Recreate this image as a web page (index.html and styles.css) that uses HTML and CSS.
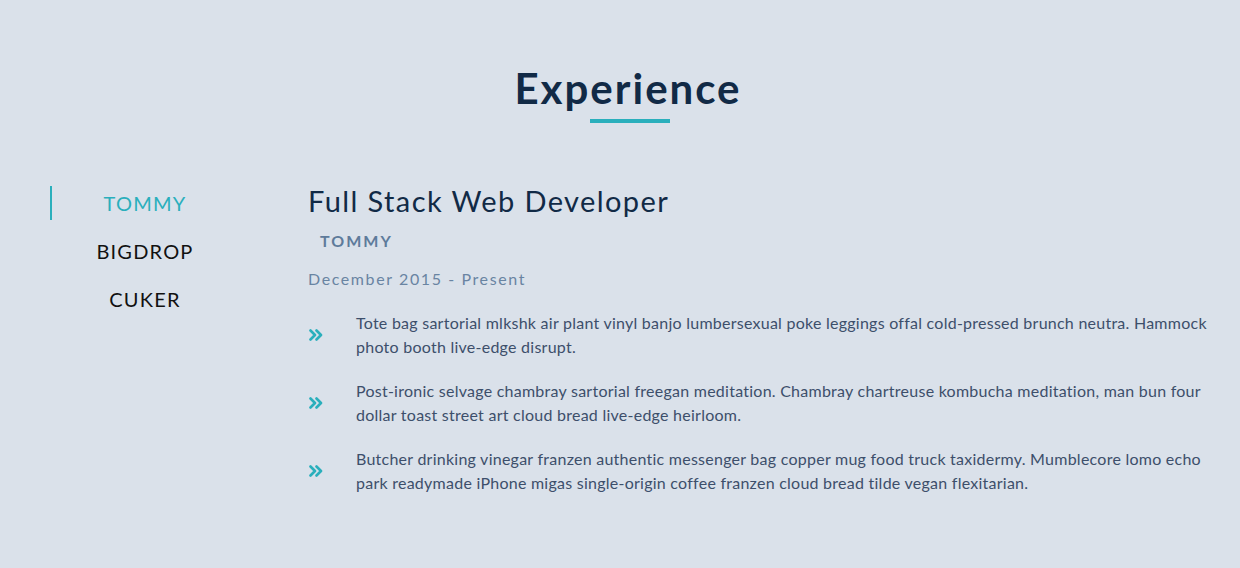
FILE: index.html
```html
<!DOCTYPE html>
<html lang="en">
<head>
<meta charset="utf-8">
<title>Experience</title>
<link rel="stylesheet" href="styles.css">
</head>
<body>
<section class="experience">
  <h2 class="section-title">Experience</h2>
  <div class="title-bar"></div>
  <div class="jobs">
    <ul class="tabs">
      <li class="tab active">TOMMY</li>
      <li class="tab">BIGDROP</li>
      <li class="tab">CUKER</li>
    </ul>
    <div class="job">
      <h3 class="job-title">Full Stack Web Developer</h3>
      <div class="company">TOMMY</div>
      <div class="dates">December 2015 - Present</div>
      <ul class="duties">
        <li class="duty">
          <svg class="chev" viewBox="0 0 14 12" width="14" height="12"><path d="M1.5 1.5 L6 6 L1.5 10.5 M7.5 1.5 L12 6 L7.5 10.5" fill="none" stroke="currentColor" stroke-width="2.6" stroke-linecap="round" stroke-linejoin="round"/></svg>
          <p>Tote bag sartorial mlkshk air plant vinyl banjo lumbersexual poke leggings offal cold-pressed brunch neutra. Hammock photo booth live-edge disrupt.</p>
        </li>
        <li class="duty">
          <svg class="chev" viewBox="0 0 14 12" width="14" height="12"><path d="M1.5 1.5 L6 6 L1.5 10.5 M7.5 1.5 L12 6 L7.5 10.5" fill="none" stroke="currentColor" stroke-width="2.6" stroke-linecap="round" stroke-linejoin="round"/></svg>
          <p>Post-ironic selvage chambray sartorial freegan meditation. Chambray chartreuse kombucha meditation, man bun four dollar toast street art cloud bread live-edge heirloom.</p>
        </li>
        <li class="duty">
          <svg class="chev" viewBox="0 0 14 12" width="14" height="12"><path d="M1.5 1.5 L6 6 L1.5 10.5 M7.5 1.5 L12 6 L7.5 10.5" fill="none" stroke="currentColor" stroke-width="2.6" stroke-linecap="round" stroke-linejoin="round"/></svg>
          <p>Butcher drinking vinegar franzen authentic messenger bag copper mug food truck taxidermy. Mumblecore lomo echo park readymade iPhone migas single-origin coffee franzen cloud bread tilde vegan flexitarian.</p>
        </li>
      </ul>
    </div>
  </div>
</section>
</body>
</html>
```

FILE: styles.css
```css
* { box-sizing: border-box; }
html, body {
  margin: 0;
  padding: 0;
  background: #dae1ea;
}
body {
  font-family: Lato, "Open Sans", sans-serif;
  color: #3b4d68;
  width: 1240px;
  height: 568px;
  overflow: hidden;
}
.experience {
  padding: 62px 30px 0 50px;
  display: flex;
  flex-direction: column;
}
.section-title {
  margin: 0;
  text-align: center;
  font-size: 42px;
  line-height: 52px;
  font-weight: 700;
  letter-spacing: 2px;
  color: #112a46;
  padding-right: 4px;
}
.title-bar {
  width: 80px;
  height: 4px;
  background: #2aafbc;
  margin: 5px auto 0;
}
.jobs {
  display: flex;
  margin-top: 63px;
}
.tabs {
  list-style: none;
  margin: 0;
  padding: 0;
  width: 188px;
  flex: none;
  margin-right: 70px;
  display: flex;
  flex-direction: column;
  gap: 14px;
}
.tab {
  height: 34px;
  display: flex;
  align-items: center;
  justify-content: center;
  font-size: 20px;
  letter-spacing: 1.2px;
  color: #111;
  border-left: 2px solid transparent;
}
.tab.active {
  color: #2aafbc;
  border-left-color: #2aafbc;
}
.job { flex: 1; min-width: 0; }
.job-title {
  margin: -2px 0 0;
  font-size: 29px;
  line-height: 34px;
  font-weight: 400;
  letter-spacing: 1.4px;
  color: #112a46;
}
.company {
  margin: 12px 0 0 12px;
  font-size: 16px;
  font-weight: 700;
  letter-spacing: 2px;
  color: #5e7b9b;
  line-height: 22px;
}
.dates {
  margin-top: 17px;
  font-size: 16px;
  letter-spacing: 1.6px;
  color: #6984a2;
  line-height: 20px;
}
.duties {
  list-style: none;
  margin: 22px 0 0;
  padding: 0;
}
.duty {
  display: flex;
  align-items: center;
  margin-bottom: 20px;
}
.chev {
  flex: none;
  color: #2aafbc;
  width: 14px;
  height: 12px;
  margin: 0 33px 0 1px;
}
.duty p {
  margin: 0;
  font-size: 16px;
  line-height: 24px;
  letter-spacing: 0.25px;
  color: #3d4f6b;
}
```
